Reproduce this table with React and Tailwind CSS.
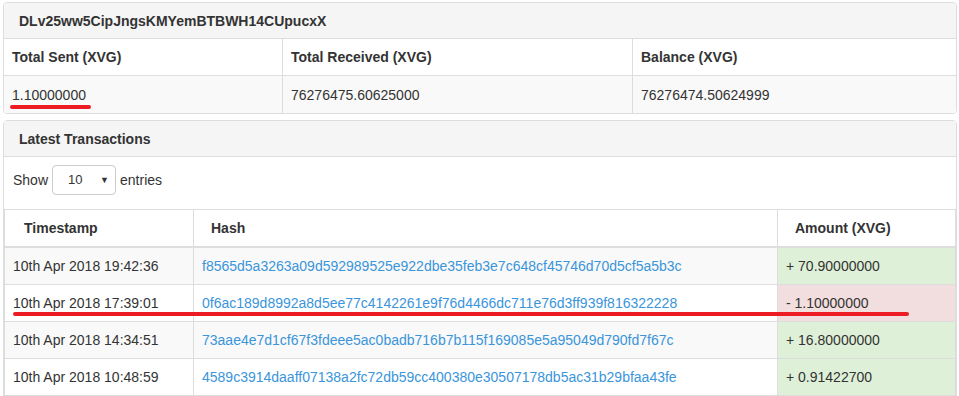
import React from 'react';

const txs = [
  { time: '10th Apr 2018 19:42:36', hash: 'f8565d5a3263a09d592989525e922dbe35feb3e7c648cf45746d70d5cf5a5b3c', amount: '+ 70.90000000', sent: false },
  { time: '10th Apr 2018 17:39:01', hash: '0f6ac189d8992a8d5ee77c4142261e9f76d4466dc711e76d3ff939f816322228', amount: '- 1.10000000', sent: true },
  { time: '10th Apr 2018 14:34:51', hash: '73aae4e7d1cf67f3fdeee5ac0badb716b7b115f169085e5a95049d790fd7f67c', amount: '+ 16.80000000', sent: false },
  { time: '10th Apr 2018 10:48:59', hash: '4589c3914daaff07138a2fc72db59cc400380e30507178db5ac31b29bfaa43fe', amount: '+ 0.91422700', sent: false },
];

function App() {
  return (
    <div className="relative w-[959px] h-[396px] overflow-hidden bg-white font-['Liberation_Sans',Arial,sans-serif] text-[14px] leading-5 text-[#333]">
      {/* address summary panel */}
      <div className="ml-[3px] mt-[2px] w-[954px] border border-[#ddd] rounded overflow-hidden">
        <div className="h-9 flex items-center px-[15px] bg-[#f5f5f5] border-b border-[#ddd] font-bold">
          DLv25ww5CipJngsKMYemBTBWH14CUpucxX
        </div>
        <div className="grid grid-cols-[279px_350px_1fr] font-bold">
          <div className="h-[37px] flex items-center px-2 border-r border-b border-[#ddd]">Total Sent (XVG)</div>
          <div className="h-[37px] flex items-center px-2 border-r border-b border-[#ddd]">Total Received (XVG)</div>
          <div className="h-[37px] flex items-center px-2 border-b border-[#ddd]">Balance (XVG)</div>
        </div>
        <div className="grid grid-cols-[279px_350px_1fr] bg-[#f9f9f9]">
          <div className="h-[37px] flex items-center px-2 border-r border-[#ddd]">1.10000000</div>
          <div className="h-[37px] flex items-center px-2 border-r border-[#ddd]">76276475.60625000</div>
          <div className="h-[37px] flex items-center px-2">76276474.50624999</div>
        </div>
      </div>

      {/* latest transactions panel */}
      <div className="ml-[3px] mt-[6px] w-[954px] border border-[#ddd] rounded-t">
        <div className="h-9 flex items-center px-[15px] bg-[#f5f5f5] border-b border-[#ddd] font-bold">
          Latest Transactions
        </div>
        <div className="h-[52px] flex items-start pt-[8px] pl-[9px] gap-[4px]">
          <span className="leading-[30px]">Show</span>
          <div className="w-[64px] h-[30px] border border-[#ccc] rounded flex items-center justify-between pl-[15px] pr-[6px] text-[13px]">
            <span>10</span>
            <span className="text-[9px]">▼</span>
          </div>
          <span className="leading-[30px]">entries</span>
        </div>
        <div className="border-x border-t border-[#ddd]">
          <div className="grid grid-cols-[189px_584px_1fr] font-bold border-b-2 border-[#ddd]">
            <div className="h-9 flex items-center pl-[19px] border-r border-[#ddd]">Timestamp</div>
            <div className="h-9 flex items-center pl-[17px] border-r border-[#ddd]">Hash</div>
            <div className="h-9 flex items-center pl-[17px]">Amount (XVG)</div>
          </div>
          {txs.map((tx, i) => (
            <div key={tx.hash} className={`grid grid-cols-[189px_584px_1fr] border-b border-[#ddd] ${i % 2 === 0 ? 'bg-[#f9f9f9]' : 'bg-white'}`}>
              <div className="h-9 flex items-center px-2 border-r border-[#ddd]">{tx.time}</div>
              <div className="h-9 flex items-center px-2 border-r border-[#ddd] text-[#3a95db]">{tx.hash}</div>
              <div className={`h-9 flex items-center px-2 ${tx.sent ? 'bg-[#f2dede]' : 'bg-[#dff0d8]'}`}>{tx.amount}</div>
            </div>
          ))}
        </div>
      </div>

      {/* red annotation strokes */}
      <div className="absolute left-[10px] top-[105px] w-[81px] h-[4px] rounded-full bg-[#ed1c24]" />
      <div className="absolute left-[13px] top-[312px] w-[896px] h-[4px] rounded-full bg-[#ed1c24]" />
    </div>
  );
}

export default App;
